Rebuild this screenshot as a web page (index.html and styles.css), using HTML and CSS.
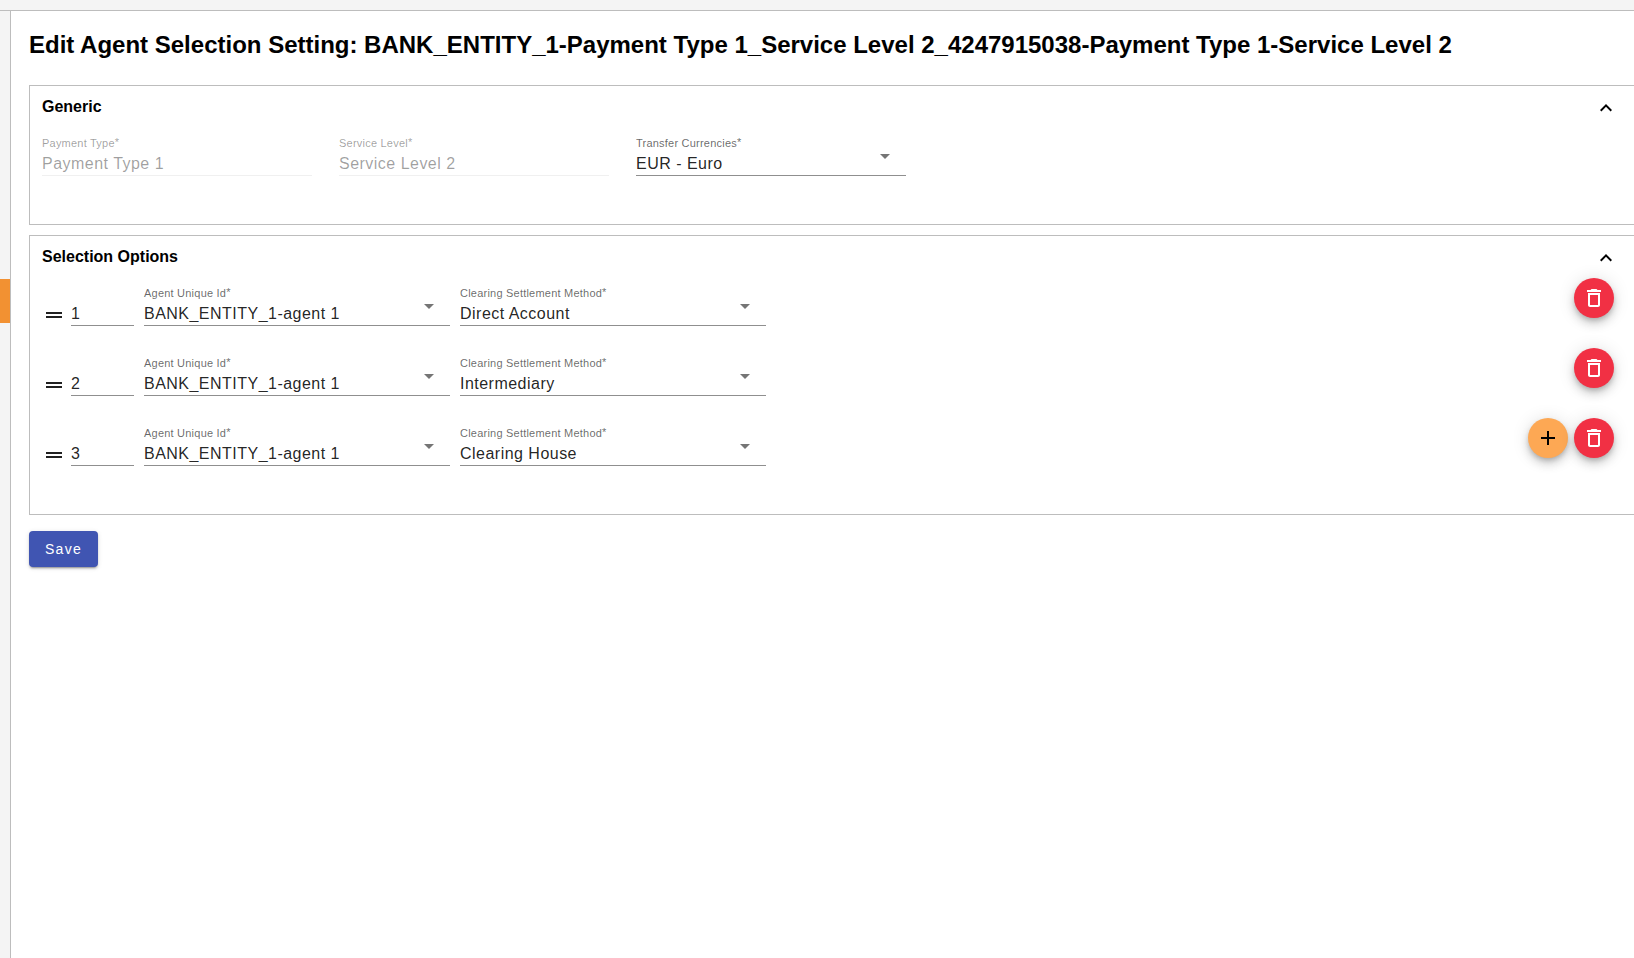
FILE: index.html
```html
<!DOCTYPE html>
<html lang="en">
<head>
    <meta charset="UTF-8">
    <meta name="viewport" content="width=device-width, initial-scale=1.0">
    <title>Edit Agent Selection Setting</title>
    <link rel="stylesheet" href="styles.css">
</head>
<body>
    <svg class="icon-defs" aria-hidden="true">
        <symbol id="icon-up" viewBox="0 0 24 24"><path d="M12 8l-6 6 1.41 1.41L12 10.83l4.59 4.58L18 14z"/></symbol>
        <symbol id="icon-drag" viewBox="0 0 24 24"><path d="M20 9H4v2h16V9zM4 15h16v-2H4v2z"/></symbol>
        <symbol id="icon-add" viewBox="0 0 24 24"><path d="M19 13h-6v6h-2v-6H5v-2h6V5h2v6h6v2z"/></symbol>
        <symbol id="icon-delete" viewBox="0 0 24 24"><path d="M6 19c0 1.1.9 2 2 2h8c1.1 0 2-.9 2-2V7H6v12zM8 9h8v10H8V9zm7.5-5l-1-1h-5l-1 1H5v2h14V4h-3.5z"/></symbol>
    </svg>
    <header class="topbar"></header>
    <div class="layout">
        <nav class="sidebar">
            <div class="sidebar-active"></div>
        </nav>
        <main class="content">
            <h1>Edit Agent Selection Setting: BANK_ENTITY_1-Payment Type 1_Service Level 2_4247915038-Payment Type 1-Service Level 2</h1>
            <form>
                <section class="panel">
                    <div class="panel-header">
                        <h2>Generic</h2>
                        <button type="button" class="toggle" aria-label="Collapse Generic"><svg class="icon"><use href="#icon-up"/></svg></button>
                    </div>
                    <div class="row generic-row">
                        <div class="field">
                            <label for="paymentType">Payment Type<sup>*</sup></label>
                            <input type="text" id="paymentType" value="Payment Type 1" disabled>
                        </div>
                        <div class="field">
                            <label for="serviceLevel">Service Level<sup>*</sup></label>
                            <input type="text" id="serviceLevel" value="Service Level 2" disabled>
                        </div>
                        <div class="field select-field">
                            <label for="currencies">Transfer Currencies<sup>*</sup></label>
                            <select id="currencies"><option>EUR - Euro</option></select>
                        </div>
                    </div>
                </section>

                <section class="panel">
                    <div class="panel-header">
                        <h2>Selection Options</h2>
                        <button type="button" class="toggle" aria-label="Collapse Selection Options"><svg class="icon"><use href="#icon-up"/></svg></button>
                    </div>
                    <div class="row option-row">
                        <svg class="icon drag-handle"><use href="#icon-drag"/></svg>
                        <div class="field order-field">
                            <input type="text" aria-label="Order" value="1">
                        </div>
                        <div class="field select-field">
                            <label for="agent1">Agent Unique Id<sup>*</sup></label>
                            <select id="agent1"><option>BANK_ENTITY_1-agent 1</option></select>
                        </div>
                        <div class="field select-field">
                            <label for="method1">Clearing Settlement Method<sup>*</sup></label>
                            <select id="method1"><option>Direct Account</option><option>Intermediary</option><option>Clearing House</option></select>
                        </div>
                        <div class="actions">
                            <button type="button" class="fab delete" aria-label="Delete"><svg class="icon"><use href="#icon-delete"/></svg></button>
                        </div>
                    </div>
                    <div class="row option-row">
                        <svg class="icon drag-handle"><use href="#icon-drag"/></svg>
                        <div class="field order-field">
                            <input type="text" aria-label="Order" value="2">
                        </div>
                        <div class="field select-field">
                            <label for="agent2">Agent Unique Id<sup>*</sup></label>
                            <select id="agent2"><option>BANK_ENTITY_1-agent 1</option></select>
                        </div>
                        <div class="field select-field">
                            <label for="method2">Clearing Settlement Method<sup>*</sup></label>
                            <select id="method2"><option>Direct Account</option><option selected>Intermediary</option><option>Clearing House</option></select>
                        </div>
                        <div class="actions">
                            <button type="button" class="fab delete" aria-label="Delete"><svg class="icon"><use href="#icon-delete"/></svg></button>
                        </div>
                    </div>
                    <div class="row option-row">
                        <svg class="icon drag-handle"><use href="#icon-drag"/></svg>
                        <div class="field order-field">
                            <input type="text" aria-label="Order" value="3">
                        </div>
                        <div class="field select-field">
                            <label for="agent3">Agent Unique Id<sup>*</sup></label>
                            <select id="agent3"><option>BANK_ENTITY_1-agent 1</option></select>
                        </div>
                        <div class="field select-field">
                            <label for="method3">Clearing Settlement Method<sup>*</sup></label>
                            <select id="method3"><option>Direct Account</option><option>Intermediary</option><option selected>Clearing House</option></select>
                        </div>
                        <div class="actions">
                            <button type="button" class="fab add" aria-label="Add"><svg class="icon"><use href="#icon-add"/></svg></button>
                            <button type="button" class="fab delete" aria-label="Delete"><svg class="icon"><use href="#icon-delete"/></svg></button>
                        </div>
                    </div>
                </section>
                <button type="submit" class="save">Save</button>
            </form>
        </main>
    </div>
</body>
</html>
```
FILE: styles.css
```css
:root {
    --border-color: #bdbdbd;
    --chrome-color: #f4f4f4;
    --text-color: rgba(0, 0, 0, 0.87);
    --label-color: rgba(0, 0, 0, 0.6);
    --disabled-color: rgba(0, 0, 0, 0.38);
    --primary-color: #4055b2;
    --warn-color: #f13044;
    --accent-color: #fda854;
    --active-color: #f29132;
}
* {
    box-sizing: border-box;
}
body {
    font-family: "Liberation Sans", Arial, sans-serif;
    margin: 0;
    min-height: 100vh;
    display: flex;
    flex-direction: column;
    color: #000;
    background-color: #fff;
}
.icon-defs {
    display: none;
}
.icon {
    width: 24px;
    height: 24px;
    fill: currentColor;
    display: block;
    flex-shrink: 0;
}
.topbar {
    height: 11px;
    background-color: var(--chrome-color);
    border-bottom: 1px solid var(--border-color);
}
.layout {
    flex: 1;
    display: flex;
}
.sidebar {
    width: 11px;
    flex-shrink: 0;
    padding-top: 268px;
    background-color: var(--chrome-color);
    border-right: 1px solid var(--border-color);
}
.sidebar-active {
    height: 44px;
    background-color: var(--active-color);
}
.content {
    flex: 1;
    min-width: 0;
    padding: 20px 0 20px 18px;
}
h1 {
    font-size: 24px;
    line-height: 28px;
    margin: 0 0 26px;
}
h2 {
    font-size: 16px;
    line-height: 20px;
    margin: 0;
}
button {
    font-family: inherit;
    border: none;
    cursor: pointer;
}

/* panels run up to the right edge of the window */
.panel {
    border: 1px solid var(--border-color);
    border-right: none;
    padding: 0 20px 26px 12px;
    margin-bottom: 10px;
}
.panel-header {
    height: 42px;
    display: flex;
    align-items: center;
    justify-content: space-between;
}
.toggle {
    padding: 2px 0 0;
    margin-right: -4px;
    background: none;
    color: #000;
}

.row {
    display: flex;
    align-items: flex-start;
    height: 70px;
}
.generic-row {
    gap: 27px;
}
.option-row {
    gap: 10px;
}
.field {
    position: relative;
    flex: 0 1 306px;
    min-width: 0;
    padding-top: 8px;
}
.generic-row .field {
    flex-basis: 270px;
}
.field label {
    display: block;
    height: 14px;
    font-size: 11px;
    line-height: 15px;
    letter-spacing: 0.02em;
    color: var(--label-color);
    white-space: nowrap;
}
.field sup {
    font-size: 11px;
    line-height: 0;
    vertical-align: 1px;
}
.field input,
.field select {
    display: block;
    width: 100%;
    height: 26px;
    padding: 2px 0 0;
    border: none;
    border-bottom: 1px solid rgba(0, 0, 0, 0.44);
    border-radius: 0;
    outline: none;
    appearance: none;
    background: none;
    font-family: inherit;
    font-size: 16px;
    letter-spacing: 0.03em;
    color: var(--text-color);
}
.field input:disabled {
    color: var(--disabled-color);
    border-bottom-color: rgba(0, 0, 0, 0.06);
}
.field:has(input:disabled) label {
    color: var(--disabled-color);
}
.select-field::after {
    content: "";
    position: absolute;
    top: 26px;
    right: 16px;
    border: 5px solid transparent;
    border-top-color: rgba(0, 0, 0, 0.54);
    border-bottom: none;
    pointer-events: none;
}
.drag-handle {
    margin-top: 25px;
    margin-right: -5px;
    color: var(--text-color);
    cursor: move;
}
.order-field {
    flex: 0 0 63px;
    padding-top: 22px;
}
.actions {
    margin-left: auto;
    display: flex;
    gap: 6px;
}
.fab {
    width: 40px;
    height: 40px;
    padding: 8px;
    border-radius: 50%;
    box-shadow: 0 3px 5px -1px rgba(0, 0, 0, 0.2), 0 6px 10px 0 rgba(0, 0, 0, 0.14), 0 1px 18px 0 rgba(0, 0, 0, 0.12);
}
.delete {
    background-color: var(--warn-color);
    color: #fff;
}
.add {
    background-color: var(--accent-color);
    color: #000;
}
.save {
    height: 36px;
    margin-top: 6px;
    padding: 0 16px;
    border-radius: 4px;
    background-color: var(--primary-color);
    color: #fff;
    font-size: 14px;
    letter-spacing: 0.09em;
    box-shadow: 0 3px 1px -2px rgba(0, 0, 0, 0.2), 0 2px 2px 0 rgba(0, 0, 0, 0.14), 0 1px 5px 0 rgba(0, 0, 0, 0.12);
}
```
